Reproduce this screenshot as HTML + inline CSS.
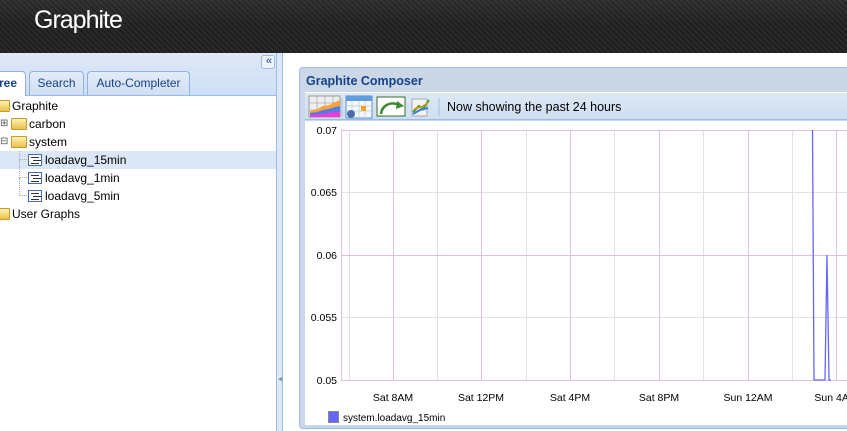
<!DOCTYPE html>
<html><head><style>
*{margin:0;padding:0;box-sizing:border-box}
body{width:847px;height:431px;overflow:hidden;position:relative;background:#fff;font-family:"Liberation Sans",sans-serif;font-size:12px}
.hdr{position:absolute;left:0;top:0;width:847px;height:53px;background:repeating-linear-gradient(45deg,#1e1e1e 0 2px,#2a2a2a 2px 4px);}
.hdr:after{content:"";position:absolute;left:0;top:0;right:0;height:26px;background:linear-gradient(rgba(255,255,255,.05),rgba(0,0,0,0))}
.logo{position:absolute;left:34px;top:6px;color:#fff;font-size:25px;letter-spacing:-1px;z-index:2}
.left{position:absolute;left:0;top:53px;width:277px;height:378px;background:#fff;border-right:1px solid #99bbe8}
.lhead{position:absolute;left:0;top:0;width:276px;height:43px;background:linear-gradient(#dfe8f6,#cedff5);border-bottom:1px solid #99bbe8}
.tab{position:absolute;top:18px;height:24px;border:1px solid #8db2e3;border-bottom:none;border-radius:4px 4px 0 0;background:linear-gradient(#e3ecf8,#cfdef3);color:#15428b;font-size:12px;line-height:22px;text-align:center}
.tab.a{background:#fff;font-weight:bold;color:#15428b;height:25px}
.colb{position:absolute;left:261px;top:2px;width:14px;height:14px;border:1px solid #99bbe8;border-radius:3px;background:#eef3fb;color:#15428b;font-size:11px;line-height:11px;text-align:center;letter-spacing:-2px}
.row{position:absolute;left:0;width:276px;height:18px;font-size:12px;line-height:18px;color:#000}
.fold{position:absolute;width:16px;height:12px;top:3px;background:linear-gradient(#fff1b0,#e9c24f);border:1px solid #c79c2a;border-radius:1px}
.leaf{position:absolute;width:14px;height:12px;top:3px;border:1px solid #3d6fb5;background:#fff}
.leaf:before{content:"";position:absolute;left:2px;top:2px;width:8px;height:1px;background:#333;box-shadow:2px 3px 0 #333,0 6px 0 #333}
.split{position:absolute;left:277px;top:53px;width:5px;height:378px;background:#dfe8f6}
.right{position:absolute;left:282px;top:53px;width:565px;height:378px;border-left:1px solid #99bbe8;background:#fff}
.win{position:absolute;left:299px;top:67px;width:560px;height:362px;border:1px solid #99bbe8;background:#c9d7e6;border-radius:4px}
.title{position:absolute;left:306px;top:74px;font-weight:bold;color:#15428b;font-size:12.5px}
.tb{position:absolute;left:305px;top:92px;width:542px;height:28px;background:linear-gradient(#dde8f5,#d0def0);border-top:1px solid #fff;border-bottom:1px solid #99bbe8}
.chart{position:absolute;left:305px;top:121px;width:542px;height:304px;background:#fff}
</style></head><body>
<div class="hdr"></div><div class="logo">Graphite</div>
<div class="left">
 <div class="lhead">
  <div class="tab a" style="left:-10px;width:36px">ree</div>
  <div class="tab" style="left:29px;width:55px">Search</div>
  <div class="tab" style="left:87px;width:103px">Auto-Completer</div>
  <div class="colb">«</div>
 </div>
 <div class="row" style="top:44px"><span class="fold" style="left:-6px"></span><span style="position:absolute;left:12px">Graphite</span></div>
 <div class="row" style="top:62px"><span style="position:absolute;left:0;top:0;font-size:10px;color:#555">⊞</span><span class="fold" style="left:11px"></span><span style="position:absolute;left:29px">carbon</span></div>
 <div class="row" style="top:80px"><span style="position:absolute;left:0;top:0;font-size:10px;color:#555">⊟</span><span class="fold" style="left:11px"></span><span style="position:absolute;left:29px">system</span></div>
 <div class="row" style="top:98px;background:#dbe6f6"><span style="position:absolute;left:19px;top:0;height:9px;border-left:1px dotted #aaa;border-bottom:1px dotted #aaa;width:8px"></span><span class="leaf" style="left:28px"></span><span style="position:absolute;left:45px">loadavg_15min</span></div>
 <div class="row" style="top:116px"><span style="position:absolute;left:19px;top:-9px;height:18px;border-left:1px dotted #aaa;border-bottom:1px dotted #aaa;width:8px"></span><span class="leaf" style="left:28px"></span><span style="position:absolute;left:45px">loadavg_1min</span></div>
 <div class="row" style="top:134px"><span style="position:absolute;left:19px;top:-9px;height:18px;border-left:1px dotted #aaa;border-bottom:1px dotted #aaa;width:8px"></span><span class="leaf" style="left:28px"></span><span style="position:absolute;left:45px">loadavg_5min</span></div>
 <div class="row" style="top:152px"><span class="fold" style="left:-6px"></span><span style="position:absolute;left:12px">User Graphs</span></div>
</div>
<div class="split"><div style="position:absolute;left:1px;top:322px;color:#7a8ea8;font-size:7px">◀</div></div>
<div class="right"></div>
<div class="win"></div>
<div class="title">Graphite Composer</div>
<div class="tb">
 <svg width="542" height="28" style="position:absolute;left:0;top:0">
  <g transform="translate(4,3)">
   <rect x="0" y="0" width="31" height="21" fill="#eee" stroke="#999"/>
   <path d="M0 7h31M0 14h31M8 0v21M16 0v21M24 0v21" stroke="#999" stroke-width=".6"/>
   <path d="M1 21V15L8 13L14 10L20 9L26 6L31 4V21Z" fill="#f7a43a"/>
   <path d="M1 21V17L8 16L14 14L20 13L26 11L31 10V21Z" fill="#5b76e8"/>
   <path d="M1 21V19L14 18L26 16L31 16V21Z" fill="#f03cd8"/>
  </g>
  <line x1="37" y1="5" x2="37" y2="23" stroke="#9ec0ea"/>
  <g transform="translate(41,3)">
   <rect x="0" y="0" width="26" height="22" fill="#f4f7fb" stroke="#5c8ecb"/>
   <rect x="0" y="0" width="26" height="5" fill="#5c9ee0"/>
   <path d="M0 10h26M0 15h26M6 5v17M13 5v17M19 5v17" stroke="#bcd" stroke-width=".7"/>
   <rect x="15" y="10" width="5" height="5" fill="#f6a21c"/>
   <circle cx="5" cy="18" r="4" fill="#4a6fa8"/>
  </g>
  <g transform="translate(72,4)">
   <rect x="0" y="0" width="28" height="19" fill="#fff" stroke="#3b6b2e"/>
   <path d="M4 17C5 8 14 4 22 8" stroke="#3d8a30" stroke-width="2.5" fill="none"/>
   <path d="M20 4L27 9L19 12Z" fill="#3d8a30"/>
  </g>
  <g transform="translate(106,4)">
   <rect x="1" y="2" width="15" height="17" fill="#f2f2f2" stroke="#aaa"/>
   <path d="M2 15L8 9L12 12L18 3" stroke="#2aa82a" stroke-width="2" fill="none"/>
   <path d="M2 17L9 13L17 11" stroke="#3a7ce0" stroke-width="2" fill="none"/>
   <path d="M3 12L10 10L17 6" stroke="#f28a1a" stroke-width="1.5" fill="none"/>
  </g>
  <line x1="134" y1="5" x2="134" y2="23" stroke="#9ec0ea"/>
  <text x="142" y="18" font-size="12.5" font-family="Liberation Sans" fill="#000">Now showing the past 24 hours</text>
 </svg>
</div>
<div class="chart">
 <svg width="542" height="304" style="position:absolute;left:0;top:0" font-family="Liberation Sans,sans-serif" font-size="10.5">
  <g stroke="#e2e2e2" stroke-width="1">
   <line x1="36" y1="71.5" x2="542" y2="71.5"/><line x1="36" y1="196.5" x2="542" y2="196.5"/>
   <line x1="44.5" y1="9" x2="44.5" y2="259"/><line x1="132.5" y1="9" x2="132.5" y2="259"/><line x1="221.5" y1="9" x2="221.5" y2="259"/><line x1="309.5" y1="9" x2="309.5" y2="259"/><line x1="398.5" y1="9" x2="398.5" y2="259"/><line x1="487.5" y1="9" x2="487.5" y2="259"/>
  </g>
  <g stroke="#dcc4dc" stroke-width="1">
   <line x1="36" y1="9.5" x2="542" y2="9.5"/><line x1="36" y1="134.5" x2="542" y2="134.5"/><line x1="36" y1="259.5" x2="542" y2="259.5"/>
   <line x1="36.5" y1="9" x2="36.5" y2="259"/>
   <line x1="88.5" y1="9" x2="88.5" y2="259"/><line x1="176.5" y1="9" x2="176.5" y2="259"/><line x1="265.5" y1="9" x2="265.5" y2="259"/><line x1="354.5" y1="9" x2="354.5" y2="259"/><line x1="443.5" y1="9" x2="443.5" y2="259"/><line x1="531.5" y1="9" x2="531.5" y2="259"/>
  </g>
  <path d="M507.5 9L509 259L520 259L522 134L524 259L526 259" stroke="#6666ff" stroke-width="1.3" fill="none"/>
  <g text-anchor="end" fill="#000"><text x="32" y="13">0.07</text><text x="32" y="75">0.065</text><text x="32" y="138">0.06</text><text x="32" y="200">0.055</text><text x="32" y="263">0.05</text></g>
  <g text-anchor="middle" fill="#000"><text x="88" y="280">Sat  8AM</text><text x="176" y="280">Sat 12PM</text><text x="265" y="280">Sat  4PM</text><text x="354" y="280">Sat  8PM</text><text x="443" y="280">Sun 12AM</text><text x="531" y="280">Sun  4AM</text></g>
  <rect x="23.5" y="290.5" width="10" height="11" fill="#6666ff" stroke="#888"/>
  <text x="38" y="300" font-size="10">system.loadavg_15min</text>
 </svg>
</div>
</body></html>
